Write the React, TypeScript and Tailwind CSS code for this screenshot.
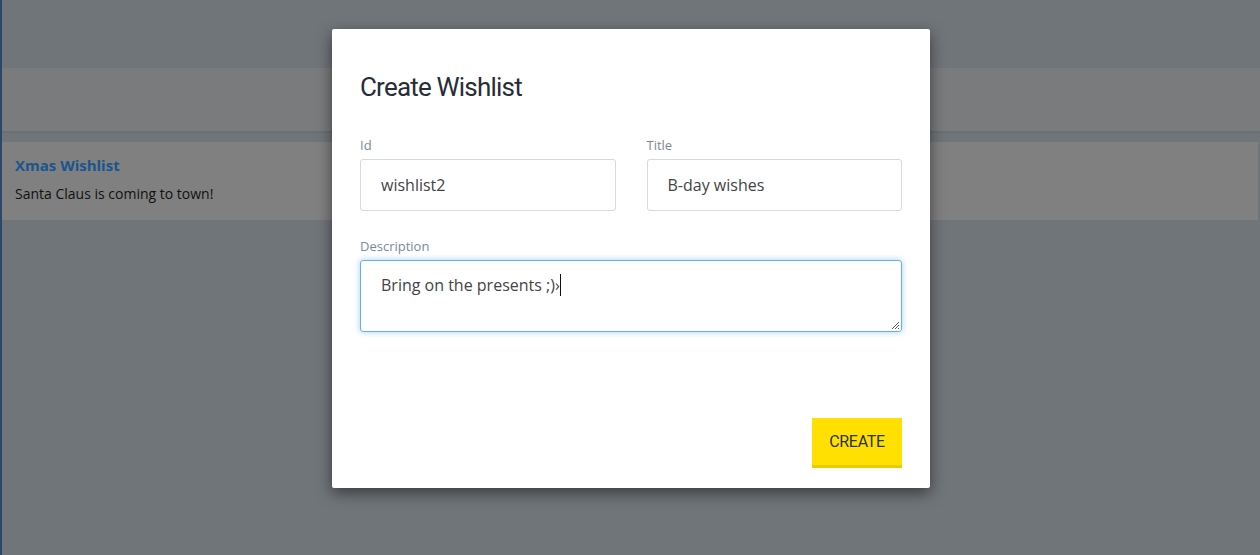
type FieldProps = {
    label: string;
    value: string;
};

function Field({ label, value }: FieldProps) {
    return (
        <div className="flex flex-col">
            <label className="text-[13px] text-[#7b8a97] leading-none mb-[7px] mt-[1px]">{label}</label>
            <div className="h-[52px] border border-[#d6d9dd] rounded-[3px] px-5 flex items-center text-[16px] text-[#444]">
                {value}
            </div>
        </div>
    );
}

function Background() {
    return (
        <div className="w-full h-[555px] bg-[#70757a] border-l-2 border-[#2e4668] flex flex-col">
            <div className="h-[68px]" />
            <div className="h-[65px] bg-[#7a7b7d] border-b-2 border-[#6b6e73]" />
            <div className="h-[9px]" />
            <div className="h-[78px] bg-[#808080] mr-[2px] px-[13px] pt-[13px]">
                <h3 className="text-[15px] font-bold text-[#1a558e] leading-[20px]">Xmas Wishlist</h3>
                <p className="text-[14px] text-[#111] mt-[9px] leading-[20px]">Santa Claus is coming to town!</p>
            </div>
        </div>
    );
}

function App() {
    return (
        <div className="relative w-[1260px] h-[555px] overflow-hidden" style={{ fontFamily: '"Open Sans", sans-serif' }}>
            <Background />
            <div className="absolute left-[332px] top-[29px] w-[598px] h-[459px] bg-white rounded-[2px] shadow-[0_5px_15px_rgba(0,0,0,0.5)] px-7 pt-[38px] flex flex-col">
                <h2 className="text-[26px] text-[#262d38] tracking-[-0.8px] leading-[40px]" style={{ fontFamily: 'Roboto, sans-serif' }}>
                    Create Wishlist
                </h2>
                <div className="grid grid-cols-2 gap-[31px] mt-[31px]">
                    <Field label="Id" value="wishlist2" />
                    <Field label="Title" value="B-day wishes" />
                </div>
                <div className="flex flex-col mt-[29px]">
                    <label className="text-[13px] text-[#7b8a97] leading-none mb-[7px]">Description</label>
                    <div className="relative h-[72px] border border-[#66afe9] rounded-[3px] shadow-[0_0_6px_rgba(102,175,233,0.6)] px-5 pt-[13px] text-[16px] text-[#444] leading-[22px]">
                        Bring on the presents ;)›<span className="inline-block w-px h-[22px] bg-[#111] align-top" />
                        <svg className="absolute right-[1px] bottom-[1px]" width="9" height="9" viewBox="0 0 9 9">
                            <path d="M8 1 L1 8 M8 4 L4 8 M8 7 L7 8" stroke="#555" strokeWidth="1" />
                        </svg>
                    </div>
                </div>
                <div className="flex justify-end mt-[86px]">
                    <button className="w-[90px] h-[50px] bg-[#ffe000] border-b-[3px] border-[#e9cd00] text-[16px] text-[#2a3240] tracking-[-0.3px]" style={{ fontFamily: 'Roboto, sans-serif' }}>
                        CREATE
                    </button>
                </div>
            </div>
        </div>
    );
}

export default App;
